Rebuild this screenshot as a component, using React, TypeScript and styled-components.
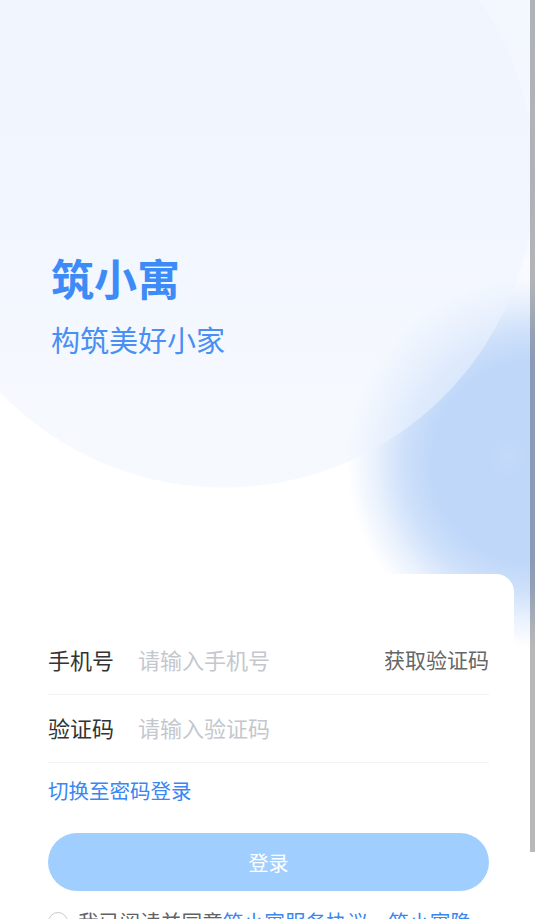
import React, { useEffect, useState } from 'react'
import styled, { createGlobalStyle } from 'styled-components'

const GlobalStyle = createGlobalStyle`
  html {
    scrollbar-width: none;
  }
  html::-webkit-scrollbar {
    display: none;
  }
  body {
    margin: 0;
    background: #fff;
    font-family: "Noto Sans CJK SC", "Noto Sans", sans-serif;
    -webkit-font-smoothing: antialiased;
  }
  * {
    box-sizing: border-box;
  }
`

const LoginPage: React.FC = () => {
  const [thumb, setThumb] = useState(852)

  useEffect(() => {
    const doc = document.documentElement
    const total = doc.scrollHeight
    const view = window.innerHeight
    if (total > view) {
      setThumb(Math.round((view * view) / total))
    }
  }, [])

  return (
    <Page>
      <GlobalStyle />
      <Hero>
        <Title>筑小寓</Title>
        <Slogan>构筑美好小家</Slogan>
      </Hero>
      <Card>
        <Field>
          <Label>手机号</Label>
          <Input type="tel" placeholder="请输入手机号" />
          <CodeButton>获取验证码</CodeButton>
        </Field>
        <Field>
          <Label>验证码</Label>
          <Input type="text" placeholder="请输入验证码" />
        </Field>
        <SwitchLink>切换至密码登录</SwitchLink>
        <SubmitButton disabled>登录</SubmitButton>
        <Agreement>
          <Radio />
          <AgreementText>
            我已阅读并同意<Link>筑小寓服务协议</Link>、<Link>筑小寓隐私政策</Link>
          </AgreementText>
        </Agreement>
      </Card>
      <ScrollThumb style={{ height: thumb }} />
    </Page>
  )
}

export default LoginPage

const Page = styled.div`
  min-height: 100vh;
  background:
    radial-gradient(
      circle at 224px 177px,
      rgba(238, 244, 254, 0.55) 310px,
      rgba(238, 244, 254, 0) 311px
    ),
    radial-gradient(
      circle at 508px 457px,
      rgba(255, 255, 255, 0.08) 0,
      rgba(255, 255, 255, 0) 22px
    ),
    radial-gradient(
      circle at 532px 462px,
      #bfd7f9 0,
      #bfd7f9 100px,
      rgba(191, 215, 249, 0.75) 130px,
      rgba(191, 215, 249, 0.3) 160px,
      rgba(191, 215, 249, 0) 185px
    ),
    linear-gradient(180deg, #f3f7fe 0, #f7f9fe 240px, #fff 400px);
  background-repeat: no-repeat;
`

const Hero = styled.div`
  height: 574px;
  padding: 252px 0 0 51px;
  display: flex;
  flex-direction: column;
  gap: 17px;
`

const Title = styled.h1`
  margin: 0;
  font-size: 43px;
  line-height: 50px;
  font-weight: 700;
  color: #3d8bf6;
`

const Slogan = styled.p`
  margin: 0;
  font-size: 29px;
  line-height: 40px;
  font-weight: 400;
  color: #4a8ff4;
`

const Card = styled.div`
  margin: 0 21px;
  padding: 53px 25px 28px 27px;
  background: #fff;
  border-radius: 18px 18px 0 0;
  display: flex;
  flex-direction: column;
`

const Field = styled.div`
  height: 68px;
  padding-bottom: 4px;
  display: flex;
  align-items: center;
  border-bottom: 1px solid #f3f3f3;
`

const Label = styled.span`
  width: 90px;
  flex-shrink: 0;
  font-size: 22px;
  color: #333;
`

const Input = styled.input`
  flex: 1;
  min-width: 0;
  border: none;
  outline: none;
  background: transparent;
  padding: 0;
  font-family: inherit;
  font-size: 22px;
  color: #333;

  &::placeholder {
    color: #c4c7cd;
  }
`

const CodeButton = styled.span`
  flex-shrink: 0;
  font-size: 21px;
  color: #666;
`

const SwitchLink = styled.span`
  margin-top: 13px;
  font-size: 20.5px;
  line-height: 28px;
  color: #3a87f2;
`

const SubmitButton = styled.button`
  margin-top: 29px;
  width: 100%;
  height: 58px;
  border: none;
  border-radius: 29px;
  background: #a0cfff;
  color: #fff;
  font-family: inherit;
  font-size: 20px;
`

const Agreement = styled.div`
  margin-top: 16px;
  display: flex;
  align-items: flex-start;
  gap: 10px;
`

const Radio = styled.span`
  flex-shrink: 0;
  width: 20px;
  height: 20px;
  margin-top: 5px;
  border: 1px solid #c8c9cc;
  border-radius: 50%;
`

const AgreementText = styled.p`
  margin: 0;
  font-size: 20.7px;
  line-height: 28px;
  color: #606266;
`

const Link = styled.span`
  color: #3a87f2;
`

const ScrollThumb = styled.div`
  position: fixed;
  top: 0;
  right: 0;
  width: 5px;
  background: rgba(0, 0, 0, 0.28);
`
